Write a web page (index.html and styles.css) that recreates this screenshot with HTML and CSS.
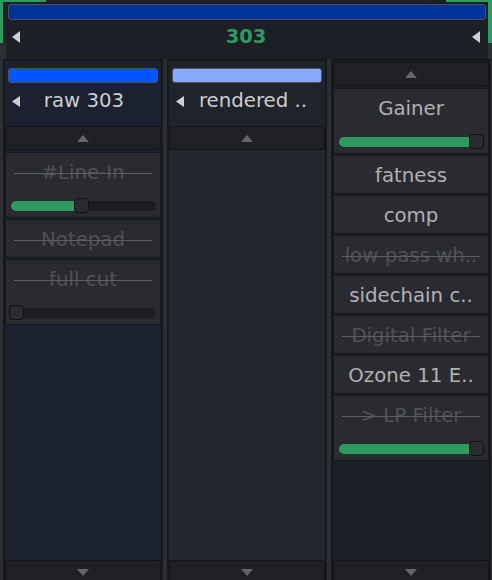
FILE: index.html
```html
<!DOCTYPE html>
<html>
<head>
<meta charset="utf-8">
<link rel="stylesheet" href="styles.css">
</head>
<body>
<div class="app">
  <header class="top">
    <span class="corner corner-l"></span>
    <span class="corner corner-r"></span>
    <span class="gutter gutter-l"></span>
    <span class="gutter gutter-r"></span>
    <div class="master-bar"></div>
    <div class="top-row">
      <svg class="tri-big" width="8" height="12" viewBox="0 0 8 12"><polygon points="8,0 8,12 0,6"/></svg>
      <span class="title">303</span>
      <svg class="tri-big" width="8" height="12" viewBox="0 0 8 12"><polygon points="8,0 8,12 0,6"/></svg>
    </div>
  </header>
  <main class="columns">
    <section class="col col-raw">
      <div class="col-head">
        <div class="color-bar bar-blue"></div>
        <div class="name-row">
          <svg class="tri-name" width="8" height="11" viewBox="0 0 8 11"><polygon points="8,0 8,11 0,5.5"/></svg>
          <span class="name">raw 303</span>
        </div>
      </div>
      <div class="nav-btn"><svg width="12" height="7" viewBox="0 0 12 7"><polygon points="0,7 12,7 6,0"/></svg></div>
      <div class="list">
        <div class="item item-slider off">
          <div class="label">#Line-In</div>
          <div class="slider"><div class="track"><div class="fill" style="width:70px"></div></div><div class="knob" style="left:65px"></div></div>
        </div>
        <div class="item off"><div class="label">Notepad</div></div>
        <div class="item item-slider off">
          <div class="label">full cut</div>
          <div class="slider"><div class="track"><div class="fill" style="width:0"></div></div><div class="knob" style="left:0"></div></div>
        </div>
      </div>
      <div class="nav-btn"><svg width="12" height="7" viewBox="0 0 12 7"><polygon points="0,0 12,0 6,7"/></svg></div>
    </section>
    <section class="col col-rendered">
      <div class="col-head">
        <div class="color-bar bar-light"></div>
        <div class="name-row">
          <svg class="tri-name" width="8" height="11" viewBox="0 0 8 11"><polygon points="8,0 8,11 0,5.5"/></svg>
          <span class="name name-long">rendered ..</span>
        </div>
      </div>
      <div class="nav-btn"><svg width="12" height="7" viewBox="0 0 12 7"><polygon points="0,7 12,7 6,0"/></svg></div>
      <div class="list"></div>
      <div class="nav-btn"><svg width="12" height="7" viewBox="0 0 12 7"><polygon points="0,0 12,0 6,7"/></svg></div>
    </section>
    <section class="col col-fx">
      <div class="nav-btn"><svg width="12" height="7" viewBox="0 0 12 7"><polygon points="0,7 12,7 6,0"/></svg></div>
      <div class="list">
        <div class="item item-slider">
          <div class="label">Gainer</div>
          <div class="slider"><div class="track"><div class="fill" style="width:100%"></div></div><div class="knob knob-end"></div></div>
        </div>
        <div class="item"><div class="label">fatness</div></div>
        <div class="item"><div class="label">comp</div></div>
        <div class="item off"><div class="label">low pass wh..</div></div>
        <div class="item"><div class="label">sidechain c..</div></div>
        <div class="item off"><div class="label">Digital Filter</div></div>
        <div class="item"><div class="label">Ozone 11 E..</div></div>
        <div class="item item-slider off">
          <div class="label">&gt; LP Filter</div>
          <div class="slider"><div class="track"><div class="fill" style="width:100%"></div></div><div class="knob knob-end"></div></div>
        </div>
      </div>
      <div class="nav-btn"><svg width="12" height="7" viewBox="0 0 12 7"><polygon points="0,0 12,0 6,7"/></svg></div>
    </section>
  </main>
</div>
</body>
</html>
```
FILE: styles.css
```css
* { box-sizing: border-box; }
html, body {
  margin: 0;
  padding: 0;
  width: 492px;
  height: 580px;
  overflow: hidden;
  background: #2b2e33;
  font-family: "DejaVu Sans", "Liberation Sans", sans-serif;
}
.app {
  width: 492px;
  height: 586px;
  display: flex;
  flex-direction: column;
}
.top {
  position: relative;
  height: 59px;
  flex: none;
  background: #1c1f26;
  padding: 4px 6px 0 8px;
}
.corner {
  position: absolute;
  top: 0;
  width: 46px;
  height: 43px;
  border-top: 2px solid #2f9a5f;
}
.corner-l { left: 0; border-left: 3px solid #2f9a5f; }
.corner-r { right: 0; border-right: 4px solid #2f9a5f; }
.gutter {
  position: absolute;
  top: 43px;
  height: 16px;
  background: #2b2e33;
}
.gutter-l { left: 0; width: 6px; }
.gutter-r { right: 0; width: 4px; }
.master-bar {
  height: 16px;
  background: #00339a;
  border: 1px solid #4e5159;
  border-radius: 3px;
}
.top-row {
  height: 24px;
  margin: 5px 6px 0 4px;
  display: flex;
  align-items: center;
  justify-content: space-between;
}
.tri-big { fill: #d0d0d0; display: block; }
.title {
  color: #2f9a5f;
  font-weight: bold;
  font-size: 19.5px;
  line-height: 24px;
}
.columns {
  flex: 1;
  display: flex;
  gap: 4px;
  padding-left: 3px;
}
.col {
  width: 160px;
  border: 2px solid #18191d;
  display: flex;
  flex-direction: column;
}
.col-raw { background: #1b2130; }
.col-rendered { background: #23272f; }
.col-fx { background: #1c1f25; padding-top: 1px; }
.col-head {
  padding: 7px 3px 7px 3px;
}
.col-raw .col-head { background: #1b2130; }
.col-rendered .col-head { background: #1f232b; }
.color-bar {
  height: 15px;
  border: 1px solid #50535a;
  border-radius: 3px;
}
.bar-blue { background: #0055ff; }
.bar-light { background: #88a9ff; }
.name-row {
  height: 36px;
  display: flex;
  align-items: center;
  padding-left: 4px;
}
.tri-name { fill: #cfcfcf; display: block; flex: none; }
.name {
  flex: 1;
  text-align: center;
  color: #cdcdcd;
  font-size: 19.75px;
  line-height: 36px;
  padding-right: 10px;
  white-space: nowrap;
}
.name-long { padding-right: 0; }
.nav-btn {
  height: 24px;
  flex: none;
  background: #1f2024;
  border: 1px solid #131417;
  border-radius: 2px;
  display: flex;
  align-items: center;
  justify-content: center;
}
.nav-btn svg { fill: #636468; display: block; }
.list {
  flex: 1;
  display: flex;
  flex-direction: column;
  gap: 1px;
  padding-top: 2px;
}
.item {
  height: 39px;
  background: #2a2b30;
  border: 1px solid #16171b;
}
.item-slider { height: 66px; }
.label {
  position: relative;
  height: 37px;
  line-height: 40px;
  text-align: center;
  color: #b0b0b0;
  font-size: 19.75px;
  white-space: nowrap;
  overflow: hidden;
}
.off .label { color: #505156; }
.off .label::after {
  content: "";
  position: absolute;
  left: 8px;
  right: 8px;
  top: 20px;
  height: 1px;
  background: #5c5d61;
}
.slider {
  position: relative;
  height: 15px;
  margin: 8px 4px 0 3px;
}
.track {
  position: absolute;
  left: 2px;
  right: 0;
  top: 2.5px;
  height: 10px;
  border-radius: 5px;
  background: #1c1d21;
  overflow: hidden;
}
.fill {
  height: 100%;
  background: #2f9a5f;
}
.knob {
  position: absolute;
  top: 0;
  width: 15px;
  height: 15px;
  border-radius: 4px;
  background: #2a2b30;
  border: 1px solid #0f1012;
}
.knob-end { right: 0; }
```
